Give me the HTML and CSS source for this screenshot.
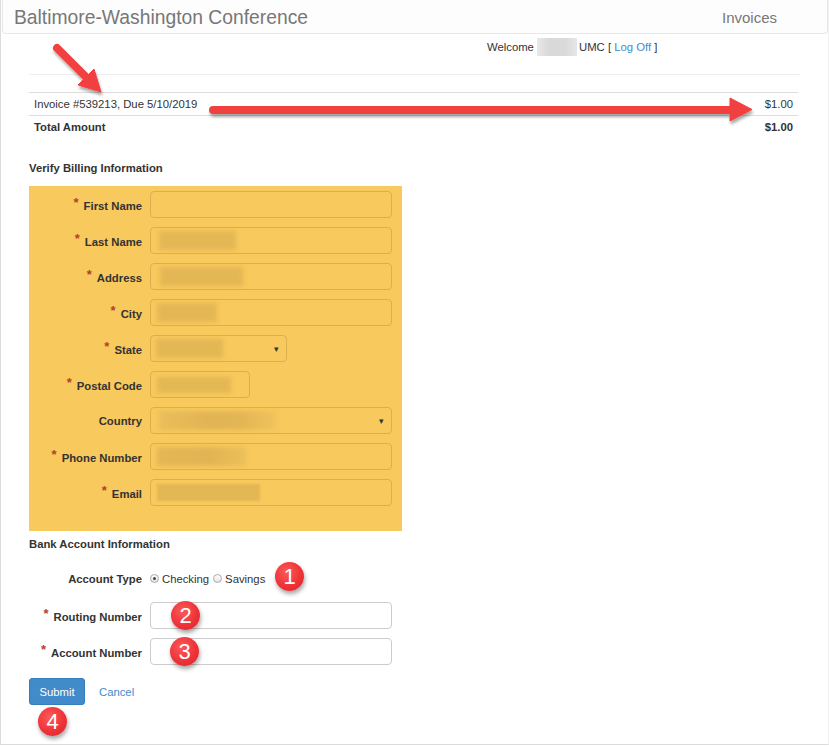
FILE: index.html
```html
<!DOCTYPE html>
<html>
<head>
    <link rel="stylesheet" href="styles.css">
</head>
<body>
    <div class="page">
        <div class="navbar">
            <span class="brand">Baltimore-Washington Conference</span>
            <span class="nav-link">Invoices</span>
        </div>

        <div class="container">
            <div class="welcome">Welcome <span class="name-mask"></span>UMC [ <a href="#">Log Off</a> ]</div>
            <hr class="divider">

            <table class="invoice-table">
                <tr>
                    <td>Invoice #539213, Due 5/10/2019</td>
                    <td class="amount">$1.00</td>
                </tr>
                <tr class="total">
                    <td>Total Amount</td>
                    <td class="amount">$1.00</td>
                </tr>
            </table>

            <h4 class="section-title">Verify Billing Information</h4>
            <div class="billing-box">
                <div class="form-row">
                    <label class="field-label"><span class="req">*</span>First Name</label>
                    <div class="input"></div>
                </div>
                <div class="form-row">
                    <label class="field-label"><span class="req">*</span>Last Name</label>
                    <div class="input"><span class="mask mask-last"></span></div>
                </div>
                <div class="form-row">
                    <label class="field-label"><span class="req">*</span>Address</label>
                    <div class="input"><span class="mask mask-address"></span></div>
                </div>
                <div class="form-row">
                    <label class="field-label"><span class="req">*</span>City</label>
                    <div class="input"><span class="mask mask-city"></span></div>
                </div>
                <div class="form-row">
                    <label class="field-label"><span class="req">*</span>State</label>
                    <div class="input select state"><span class="mask mask-state"></span><span class="caret">&#9662;</span></div>
                </div>
                <div class="form-row">
                    <label class="field-label"><span class="req">*</span>Postal Code</label>
                    <div class="input postal"><span class="mask mask-postal"></span></div>
                </div>
                <div class="form-row">
                    <label class="field-label">Country</label>
                    <div class="input select"><span class="mask mask-country"></span><span class="caret">&#9662;</span></div>
                </div>
                <div class="form-row">
                    <label class="field-label"><span class="req">*</span>Phone Number</label>
                    <div class="input"><span class="mask mask-phone"></span></div>
                </div>
                <div class="form-row">
                    <label class="field-label"><span class="req">*</span>Email</label>
                    <div class="input"><span class="mask mask-email"></span></div>
                </div>
            </div>

            <h4 class="section-title bank-title">Bank Account Information</h4>
            <div class="form-row account-type">
                <label class="field-label">Account Type</label>
                <div class="radios">
                    <span class="radio checked"></span>Checking
                    <span class="radio"></span>Savings
                </div>
            </div>
            <div class="form-row bank-row">
                <label class="field-label"><span class="req">*</span>Routing Number</label>
                <div class="input plain"></div>
            </div>
            <div class="form-row bank-row">
                <label class="field-label"><span class="req">*</span>Account Number</label>
                <div class="input plain"></div>
            </div>

            <div class="actions">
                <button class="btn-submit">Submit</button>
                <a href="#" class="cancel">Cancel</a>
            </div>
        </div>

        <!-- Annotation arrows -->
        <svg class="annotations" width="829" height="746" viewBox="0 0 829 746">
            <defs>
                <filter id="shadow" x="-20%" y="-50%" width="140%" height="200%">
                    <feDropShadow dx="1" dy="3" stdDeviation="1.5" flood-color="#000" flood-opacity="0.35"/>
                </filter>
            </defs>
            <g fill="#f1403f" stroke="#f1403f" filter="url(#shadow)">
                <line x1="56" y1="48" x2="88" y2="80" stroke-width="8" stroke-linecap="round"/>
                <polygon points="100,92 77,85 93,69" stroke-width="1" stroke-linejoin="round"/>
                <line x1="212" y1="110" x2="733" y2="110" stroke-width="8" stroke-linecap="round"/>
                <polygon points="729,98 751,109.5 729,121" stroke-width="1" stroke-linejoin="round"/>
            </g>
        </svg>

        <span class="badge badge-1">1</span>
        <span class="badge badge-2">2</span>
        <span class="badge badge-3">3</span>
        <span class="badge badge-4">4</span>
    </div>
</body>
</html>
```

FILE: styles.css
```css
body {
    margin: 0;
    padding: 0;
    background: #fff;
    font-family: "Liberation Sans", Arial, sans-serif;
    font-size: 11.3px;
    color: #333;
}

.page {
    position: relative;
    width: 827px;
    height: 744px;
    border-left: 1px solid #dcdcdc;
    border-right: 1px solid #f0f0f0;
    border-bottom: 1px solid #dcdcdc;
    overflow: hidden;
}

/* Top bar */
.navbar {
    display: flex;
    justify-content: space-between;
    align-items: center;
    height: 33px;
    margin-left: 1px;
    padding: 0 50px 0 11px;
    background: #fdfdfd;
    border: 1px solid #e7e7e7;
    border-top: none;
    border-radius: 0 0 4px 4px;
}

.brand {
    font-size: 19.3px;
    color: #777;
    padding-top: 2px;
}

.nav-link {
    font-size: 15px;
    color: #777;
    padding-top: 1px;
}

.container {
    margin-left: 28px;
    width: 771px;
}

.welcome {
    margin-top: 4px;
    padding-left: 458px;
    line-height: 16px;
    height: 16px;
}

.welcome a {
    color: #428bca;
    text-decoration: none;
}

.name-mask {
    display: inline-block;
    width: 40px;
    height: 18px;
    margin-right: 2px;
    vertical-align: -5px;
    background: linear-gradient(to right, #e8e8e8, #d9d9d9 30%, #dadada 70%, #e6e6e6);
}

.divider {
    margin: 20px 0 0;
    border: none;
    border-top: 1px solid #eee;
}

/* Invoice table */
.invoice-table {
    width: 769px;
    margin-top: 17px;
    border-collapse: collapse;
}

.invoice-table td {
    padding: 4px 5px;
    line-height: 14px;
    border-top: 1px solid #ddd;
}

.invoice-table .amount {
    text-align: right;
}

.invoice-table .total td {
    font-weight: bold;
}

.section-title {
    margin: 22px 0 10px;
    font-size: 11.3px;
    font-weight: bold;
    line-height: 16px;
}

.bank-title {
    margin: 5px 0 13px;
}

/* Billing form */
.billing-box {
    width: 363px;
    padding: 5px 10px 25px 0;
    background: #f8c95c;
}

.form-row {
    display: grid;
    grid-template-columns: 113px 242px;
    column-gap: 8px;
    align-items: center;
}

.billing-box .form-row + .form-row {
    margin-top: 9px;
}

.field-label {
    text-align: right;
    font-weight: bold;
    line-height: 16px;
}

.req {
    color: #b3402b;
    font-size: 13px;
    margin-right: 5px;
    vertical-align: 3px;
}

.input {
    box-sizing: border-box;
    height: 27px;
    border: 1px solid #dcae4e;
    border-radius: 4px;
    display: flex;
    align-items: center;
    padding-left: 6px;
}

.input.state {
    width: 137px;
}

.input.postal {
    width: 100px;
}

.input.select {
    justify-content: space-between;
    padding-right: 7px;
}

.caret {
    font-size: 9px;
    color: #333;
}

.mask {
    display: block;
    height: 19px;
    background: #e4b755;
    filter: blur(2px);
}

.mask-last { width: 77px; margin-left: 2px; }
.mask-address { width: 83px; margin-left: 3px; }
.mask-city { width: 60px; }
.mask-state { width: 67px; margin-left: -1px; }
.mask-postal { width: 74px; height: 16px; }
.mask-country {
    width: 117px;
    margin-left: 2px;
    background: linear-gradient(to right, #eabe5a, #e2b554 40%, #e3b655 70%, #efc35b);
}
.mask-phone {
    width: 89px;
    background: linear-gradient(to right, #e4b755, #e2b554 60%, #ecbf5a);
}
.mask-email { width: 103px; height: 17px; filter: blur(1px); }

/* Bank section */
.account-type {
    height: 27px;
}

.radios {
    display: flex;
    align-items: center;
}

.radio {
    box-sizing: border-box;
    display: inline-block;
    width: 9px;
    height: 9px;
    margin: 0 3px 0 0;
    border: 1px solid #a9a9a9;
    border-radius: 50%;
    background: linear-gradient(#fff, #e4e4e4);
    position: relative;
}

.radios .radio:last-of-type {
    margin-left: 4px;
}

.radio.checked::after {
    content: "";
    position: absolute;
    left: 2px;
    top: 2px;
    width: 3px;
    height: 3px;
    border-radius: 50%;
    background: #444;
}

.bank-row {
    margin-top: 9px;
}

.account-type + .bank-row {
    margin-top: 10px;
}

.input.plain {
    border-color: #ccc;
    background: #fff;
}

.actions {
    display: flex;
    align-items: center;
    margin-top: 13px;
}

.btn-submit {
    box-sizing: border-box;
    width: 56px;
    height: 27px;
    padding: 0;
    border: 1px solid #357ebd;
    border-radius: 3px;
    background: #428bca;
    color: #fff;
    font-family: inherit;
    font-size: 11.3px;
}

.cancel {
    margin-left: 14px;
    color: #428bca;
    text-decoration: none;
}

/* Annotations drawn over the page */
.annotations {
    position: absolute;
    left: 0;
    top: 0;
    pointer-events: none;
}

.badge {
    position: absolute;
    width: 29px;
    height: 29px;
    border-radius: 50%;
    background: radial-gradient(circle at 40% 35%, #fb5a5a 0%, #ee3338 55%, #d8232b 100%);
    box-shadow: 1px 3px 4px rgba(0, 0, 0, 0.35);
    color: #fff;
    font-size: 22px;
    line-height: 29px;
    text-align: center;
}

.badge-1 { left: 274px; top: 562px; }
.badge-2 { left: 170px; top: 601px; }
.badge-3 { left: 169px; top: 637px; }
.badge-4 { left: 37px; top: 707px; }
```
